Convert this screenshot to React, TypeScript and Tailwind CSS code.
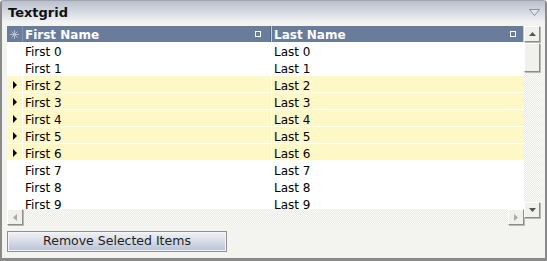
import React from "react";

const rows = Array.from({ length: 10 }, (_, i) => ({
  first: `First ${i}`,
  last: `Last ${i}`,
  selected: i >= 2 && i <= 6,
}));

const track =
  "bg-[repeating-conic-gradient(#e9e9e5_0%_25%,#fbfbf9_0%_50%)] bg-[length:2px_2px]";

function Arrow({ dir, color }: { dir: "up" | "down" | "left" | "right"; color: string }) {
  const pts = {
    up: "0,4 7,4 3.5,0",
    down: "0,0 7,0 3.5,4",
    left: "4,0 4,7 0,3.5",
    right: "0,0 0,7 4,3.5",
  }[dir];
  const horiz = dir === "up" || dir === "down";
  return (
    <svg width={horiz ? 7 : 4} height={horiz ? 4 : 7} viewBox={horiz ? "0 0 7 4" : "0 0 4 7"}>
      <polygon points={pts} fill={color} />
    </svg>
  );
}

function ScrollButton({ children }: { children: React.ReactNode }) {
  return (
    <div className="w-[16px] h-[16px] shrink-0 flex items-center justify-center bg-[#f0f0ec] border border-t-white border-l-white border-r-[#8c8c8c] border-b-[#8c8c8c] shadow-[1px_1px_0_#b8b8b4]">
      {children}
    </div>
  );
}

function HeaderSquare() {
  return <div className="w-[6px] h-[6px] border border-white" />;
}

export default function App() {
  return (
    <div className="w-[547px] h-[261px] bg-[#f3f3ef] border-l-2 border-r-2 border-b-[3px] border-t border-[#8a8a8a] border-t-[#a0a4ac] rounded-t-[4px] flex flex-col overflow-hidden font-['DejaVu_Sans',sans-serif] text-[12px] text-black">
      {/* title bar */}
      <div className="h-[21px] shrink-0 flex items-center justify-between pl-[6px] pr-[5px] bg-gradient-to-b from-[#b9c0cc] to-[#f1f2f4]">
        <span className="font-bold text-[13px] leading-none text-[#111] mt-[1px]">Textgrid</span>
        <svg width="11" height="7" viewBox="0 0 11 7" className="mt-[2px]">
          <polygon points="0.5,0.5 10.5,0.5 5.5,6.5" fill="#e4e6ea" stroke="#8d9096" />
        </svg>
      </div>

      <div className="flex flex-col pl-[5px] pt-[4px]">
        <div className="flex">
          {/* table + horizontal scrollbar */}
          <div className="w-[517px] flex flex-col">
            <div className="h-[183px] overflow-hidden bg-white">
              <div className="h-[16px] flex bg-[#697c9c] text-white font-bold border-r border-[#c9cfd9]">
                <div className="w-[16px] shrink-0 flex items-center justify-center border-r border-[#8797b2]">
                  <svg width="9" height="9" viewBox="0 0 9 9" stroke="#b7c1d3" strokeWidth="1">
                    <line x1="4.5" y1="0" x2="4.5" y2="9" />
                    <line x1="0" y1="4.5" x2="9" y2="4.5" />
                    <line x1="1.5" y1="1.5" x2="7.5" y2="7.5" />
                    <line x1="7.5" y1="1.5" x2="1.5" y2="7.5" />
                  </svg>
                </div>
                <div className="w-[248px] shrink-0 flex items-center justify-between pl-[2px] pr-[9px] border-r border-[#54647e]">
                  <span className="leading-none mt-[1px]">First Name</span>
                  <HeaderSquare />
                </div>
                <div className="flex-1 flex items-center justify-between pl-[2px] pr-[7px] border-l border-[#c9cfd9]">
                  <span className="leading-none mt-[1px]">Last Name</span>
                  <HeaderSquare />
                </div>
              </div>
              {rows.map((r) => (
                <div
                  key={r.first}
                  className={`h-[17px] flex border-b border-white ${r.selected ? "bg-[#fef7c6]" : "bg-white"}`}
                >
                  <div className="w-[16px] shrink-0 flex items-center justify-center border-r border-white pt-[1px]">
                    {r.selected && (
                      <svg width="4" height="8" viewBox="0 0 4 8">
                        <polygon points="0,0 0,8 4,4" fill="#000" />
                      </svg>
                    )}
                  </div>
                  <div className="w-[249px] shrink-0 pl-[2px] leading-[20px] border-r border-white">{r.first}</div>
                  <div className="flex-1 pl-[2px] leading-[20px]">{r.last}</div>
                </div>
              ))}
            </div>
            <div className={`h-[16px] flex ${track}`}>
              <ScrollButton>
                <Arrow dir="left" color="#a9a9a6" />
              </ScrollButton>
              <div className="flex-1" />
              <ScrollButton>
                <Arrow dir="right" color="#a9a9a6" />
              </ScrollButton>
            </div>
          </div>

          {/* vertical scrollbar */}
          <div className={`w-[16px] h-[192px] flex flex-col ${track}`}>
            <ScrollButton>
              <Arrow dir="up" color="#555" />
            </ScrollButton>
            <div className="mt-[1px] h-[29px] bg-[#f0f0ec] border border-t-white border-l-white border-r-[#8c8c8c] border-b-[#8c8c8c] shadow-[1px_1px_0_#b8b8b4]" />
            <div className="flex-1" />
            <ScrollButton>
              <Arrow dir="down" color="#555" />
            </ScrollButton>
          </div>
        </div>

        <button className="mt-[6px] w-[220px] h-[21px] border border-[#8f8f8f] shadow-[inset_0_0_0_1px_#f4f5f8] bg-gradient-to-b from-[#f0f2f6] via-[#d6dbe6] to-[#b8c1d5] text-[#222] text-[12.5px] leading-none flex items-center justify-center">
          Remove Selected Items
        </button>
      </div>
    </div>
  );
}
